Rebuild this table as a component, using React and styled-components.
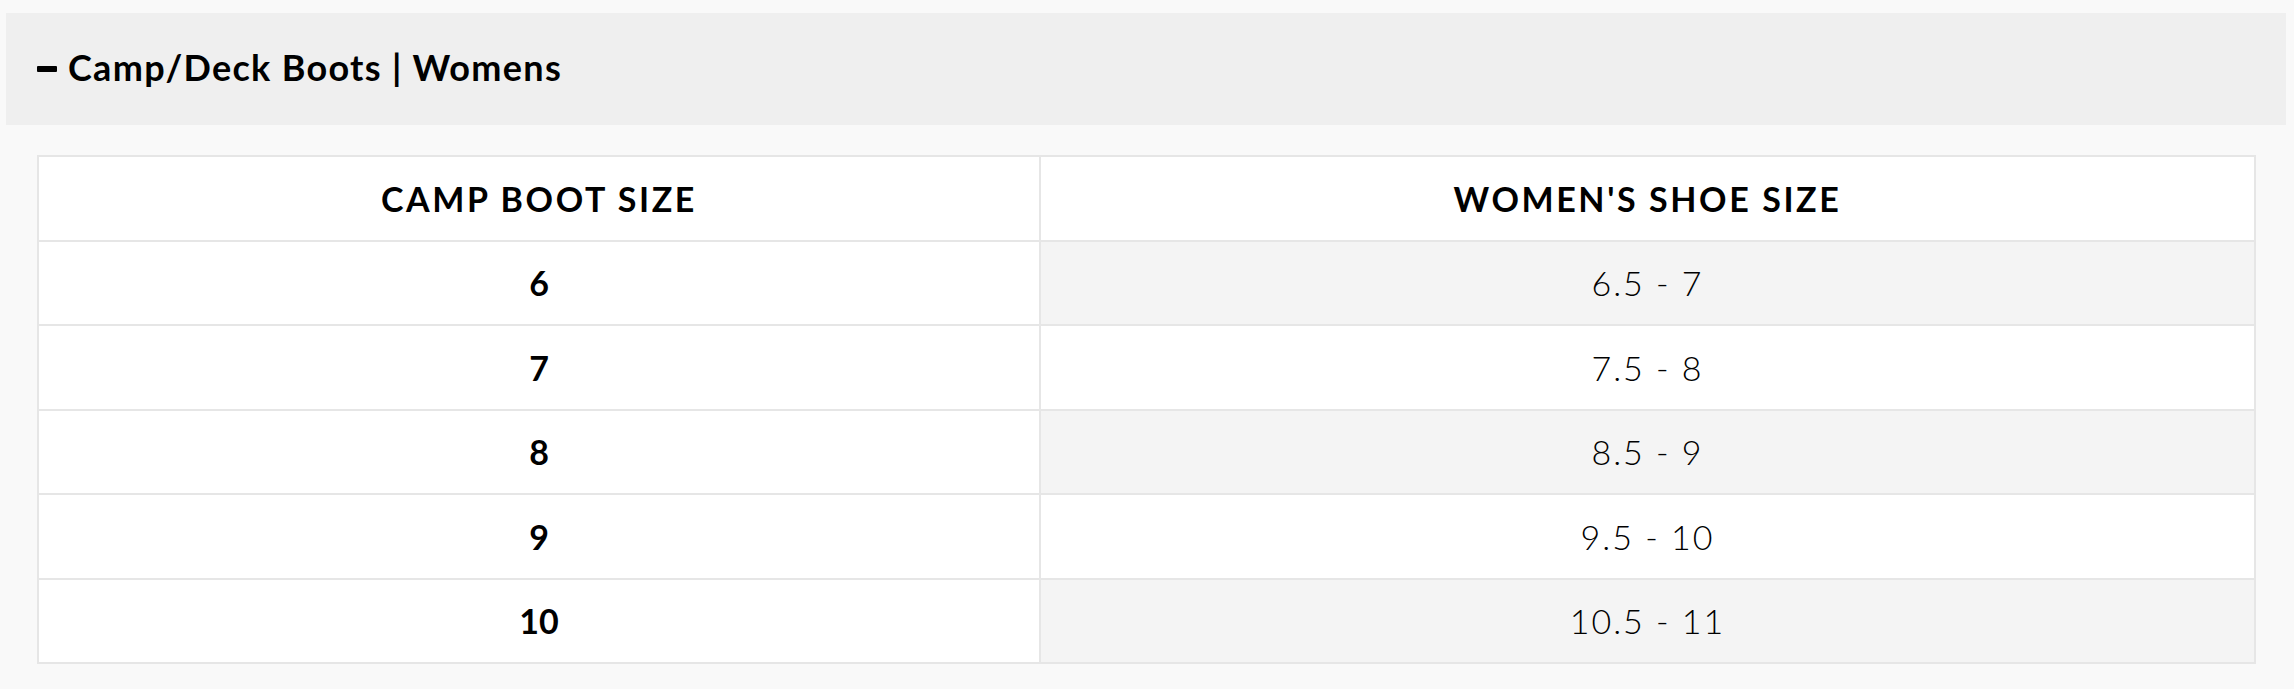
import styled, { createGlobalStyle } from 'styled-components';

const rows = [
  { boot: '6', shoe: '6.5 - 7' },
  { boot: '7', shoe: '7.5 - 8' },
  { boot: '8', shoe: '8.5 - 9' },
  { boot: '9', shoe: '9.5 - 10' },
  { boot: '10', shoe: '10.5 - 11' },
];

export default function App() {
  return (
    <>
      <GlobalStyle />
      <Page>
        <Header>
          <Dash />
          <Title>Camp/Deck Boots | Womens</Title>
        </Header>
        <Body>
          <Table>
            <thead>
              <tr>
                <Th style={{ width: '1000px' }}>CAMP BOOT SIZE</Th>
                <Th>WOMEN'S SHOE SIZE</Th>
              </tr>
            </thead>
            <tbody>
              {rows.map((row, i) => (
                <tr key={row.boot}>
                  <BootCell>{row.boot}</BootCell>
                  <ShoeCell shaded={i % 2 === 0}>{row.shoe}</ShoeCell>
                </tr>
              ))}
            </tbody>
          </Table>
        </Body>
      </Page>
    </>
  );
}

const GlobalStyle = createGlobalStyle`
  body {
    margin: 0;
    background: #f9f9f9;
    font-family: 'Lato', 'Noto Sans', sans-serif;
    color: #000;
  }
`;

const Page = styled.div`
  padding: 13px 8px 26px 6px;
  display: flex;
  flex-direction: column;
  gap: 30px;
`;

const Header = styled.div`
  height: 112px;
  background: #efefef;
  display: flex;
  align-items: center;
  gap: 11px;
  padding: 0 0 4px 31px;
  box-sizing: border-box;
`;

const Dash = styled.span`
  width: 20px;
  height: 6px;
  background: #000;
  border-radius: 1px;
  margin-top: 4px;
`;

const Title = styled.span`
  font-size: 36px;
  font-weight: 700;
  letter-spacing: 1.3px;
`;

const Body = styled.div`
  padding: 0 30px 0 31px;
`;

const Table = styled.table`
  width: 100%;
  border-collapse: collapse;
  border: 2px solid #e6e6e6;
  background: #fff;
`;

const Th = styled.th`
  height: 82.5px;
  border: 2px solid #e6e6e6;
  font-size: 34px;
  font-weight: 700;
  letter-spacing: 2.6px;
  text-align: center;
  padding: 0;
`;

const BootCell = styled.td`
  height: 82.5px;
  border: 2px solid #e6e6e6;
  font-size: 34px;
  font-weight: 700;
  text-align: center;
  padding: 0;
`;

const ShoeCell = styled.td`
  height: 82.5px;
  border: 2px solid #e6e6e6;
  background: ${(props) => (props.shaded ? '#f4f4f4' : '#fff')};
  font-size: 34px;
  font-weight: 300;
  letter-spacing: 2px;
  text-align: center;
  padding: 0;
`;
